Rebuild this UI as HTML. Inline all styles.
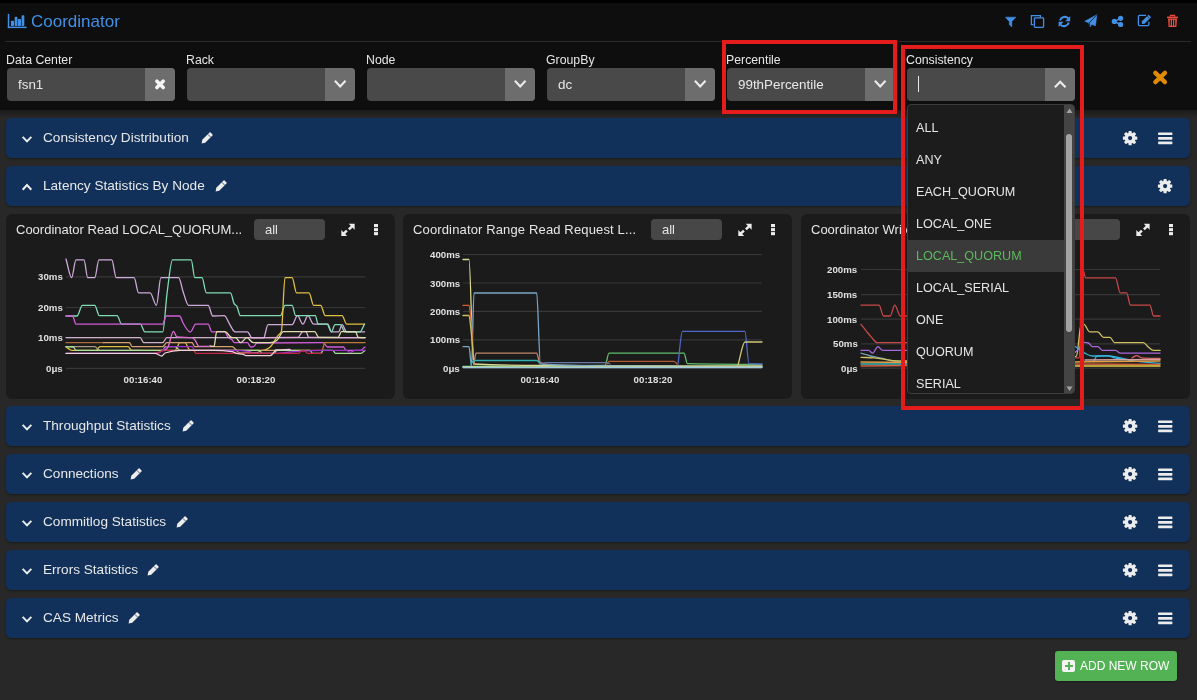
<!DOCTYPE html>
<html><head><meta charset="utf-8">
<style>
*{box-sizing:border-box;margin:0;padding:0}
html,body{width:1197px;height:700px;overflow:hidden;background:#282828;font-family:"Liberation Sans",sans-serif;}
.abs{position:absolute}
#top{left:0;top:0;width:1197px;height:3px;background:#000}
#hdr{left:0;top:3px;width:1197px;height:107px;background:#0e0e0e}
#shadow{left:0;top:110px;width:1197px;height:8px;background:linear-gradient(#1b1b1b,#282828)}
#sep{left:5px;top:41px;width:1186px;height:1px;background:#2a2a2a}
#title{left:31px;top:12px;font-size:17px;color:#4290e6;line-height:20px}
.lbl{font-size:12.3px;color:#e6e6e6;top:53px;line-height:14px;white-space:nowrap}
.inp{top:68px;height:32.5px;width:168.3px;background:#494949;border-radius:4px;overflow:hidden}
.inp .btn{position:absolute;right:0;top:0;width:30.5px;height:33px;background:#6d6d6d}
.inp .val{position:absolute;left:11px;top:9px;font-size:13.4px;color:#e8e8e8;line-height:16px;white-space:nowrap}
.row{left:6px;width:1184px;height:40px;background:#11305a;border-radius:5px;box-shadow:0 1px 2px rgba(0,0,0,.35)}
.row .t{position:absolute;left:37px;top:12px;font-size:13.6px;color:#e8e8e8;line-height:16px;white-space:nowrap}
.panel{top:214px;height:184.5px;background:#1b1b1b;border-radius:6px}
.ptitle{font-size:13px;color:#e6e6e6;line-height:16px;top:222px;white-space:nowrap}
.allbox{top:219px;width:71px;height:21px;background:#474747;border-radius:4px}
.allbox span{position:absolute;left:11px;top:3px;font-size:13px;color:#e6e6e6;line-height:16px}
.ax{font-size:9.7px;font-weight:bold;color:#e0e0e0;line-height:11px;white-space:nowrap}
.dd{left:907px;top:104px;width:168px;height:290px;background:#1c1c1c;border:1px solid #3d3d3d;border-radius:4px;overflow:hidden}
.dd .it{position:absolute;left:8px;width:150px;height:32px;font-size:12.6px;color:#e6e6e6;line-height:32px;white-space:nowrap}
.redbox{border:4px solid #e41c1c}
.abs{will-change:transform}
svg.ov{position:absolute;left:0;top:0;width:1197px;height:700px;overflow:visible}
</style></head><body>
<div class="abs" id="top"></div>
<div class="abs" id="hdr"></div>
<div class="abs" id="shadow"></div>
<div class="abs" id="sep"></div>
<div class="abs" id="title">Coordinator</div>

<div class="abs lbl" style="left:6px">Data Center</div>
<div class="abs lbl" style="left:186px">Rack</div>
<div class="abs lbl" style="left:366px">Node</div>
<div class="abs lbl" style="left:546px">GroupBy</div>
<div class="abs lbl" style="left:726px">Percentile</div>
<div class="abs lbl" style="left:906px">Consistency</div>

<div class="abs inp" style="left:7px"><div class="val">fsn1</div><div class="btn"></div></div>
<div class="abs inp" style="left:187px"><div class="btn"></div></div>
<div class="abs inp" style="left:367px"><div class="btn"></div></div>
<div class="abs inp" style="left:547px"><div class="val">dc</div><div class="btn"></div></div>
<div class="abs inp" style="left:727px"><div class="val">99thPercentile</div><div class="btn"></div></div>
<div class="abs inp" style="left:907px"><div class="btn"></div></div>
<div class="abs" style="left:918px;top:76px;width:1.3px;height:16px;background:#e8e8e8"></div>

<div class="abs row" style="top:118px"><div class="t">Consistency Distribution</div></div>
<div class="abs row" style="top:166px"><div class="t">Latency Statistics By Node</div></div>
<div class="abs row" style="top:406px"><div class="t">Throughput Statistics</div></div>
<div class="abs row" style="top:454px"><div class="t">Connections</div></div>
<div class="abs row" style="top:502px"><div class="t">Commitlog Statistics</div></div>
<div class="abs row" style="top:550px"><div class="t">Errors Statistics</div></div>
<div class="abs row" style="top:598px"><div class="t">CAS Metrics</div></div>

<div class="abs panel" style="left:6px;width:389.3px"></div>
<div class="abs panel" style="left:403.3px;width:389.4px"></div>
<div class="abs panel" style="left:800.7px;width:389.3px"></div>

<div class="abs ptitle" style="left:16px">Coordinator Read LOCAL_QUORUM...</div>
<div class="abs ptitle" style="left:413px;letter-spacing:0.14px">Coordinator Range Read Request L...</div>
<div class="abs ptitle" style="left:811px">Coordinator Write LOCAL_QUORUM...</div>
<div class="abs allbox" style="left:254px"><span>all</span></div>
<div class="abs allbox" style="left:651px"><span>all</span></div>
<div class="abs allbox" style="left:1049px"><span>all</span></div>
<div class="abs ax" style="right:1134.2px;top:271.3px">30ms</div><div class="abs ax" style="right:1134.2px;top:302.1px">20ms</div><div class="abs ax" style="right:1134.2px;top:332.3px">10ms</div><div class="abs ax" style="right:1134.2px;top:363.1px">0μs</div><div class="abs ax" style="right:737.0px;top:249.0px">400ms</div><div class="abs ax" style="right:737.0px;top:277.5px">300ms</div><div class="abs ax" style="right:737.0px;top:305.8px">200ms</div><div class="abs ax" style="right:737.0px;top:334.2px">100ms</div><div class="abs ax" style="right:737.0px;top:362.9px">0μs</div><div class="abs ax" style="right:339.4px;top:264.0px">200ms</div><div class="abs ax" style="right:339.4px;top:289.1px">150ms</div><div class="abs ax" style="right:339.4px;top:313.6px">100ms</div><div class="abs ax" style="right:339.4px;top:338.4px">50ms</div><div class="abs ax" style="right:339.4px;top:362.9px">0μs</div><div class="abs ax" style="left:123.0px;width:40px;text-align:center;top:374.3px">00:16:40</div><div class="abs ax" style="left:235.6px;width:40px;text-align:center;top:374.3px">00:18:20</div><div class="abs ax" style="left:519.7px;width:40px;text-align:center;top:374.3px">00:16:40</div><div class="abs ax" style="left:632.6px;width:40px;text-align:center;top:374.3px">00:18:20</div><div class="abs ax" style="left:917.0px;width:40px;text-align:center;top:374.3px">00:16:40</div><div class="abs ax" style="left:1030.0px;width:40px;text-align:center;top:374.3px">00:18:20</div>
<svg class="ov" viewBox="0 0 1197 700"><line x1="66" y1="276.8" x2="365" y2="276.8" stroke="#373737" stroke-width="1.2"/><line x1="66" y1="307.5" x2="365" y2="307.5" stroke="#373737" stroke-width="1.2"/><line x1="66" y1="337.9" x2="365" y2="337.9" stroke="#373737" stroke-width="1.2"/><line x1="66" y1="368.3" x2="365" y2="368.3" stroke="#373737" stroke-width="1.2"/><line x1="463" y1="254.5" x2="762" y2="254.5" stroke="#373737" stroke-width="1.2"/><line x1="463" y1="283" x2="762" y2="283" stroke="#373737" stroke-width="1.2"/><line x1="463" y1="311.4" x2="762" y2="311.4" stroke="#373737" stroke-width="1.2"/><line x1="463" y1="339.8" x2="762" y2="339.8" stroke="#373737" stroke-width="1.2"/><line x1="463" y1="368.2" x2="762" y2="368.2" stroke="#373737" stroke-width="1.2"/><line x1="861" y1="269.5" x2="1160" y2="269.5" stroke="#373737" stroke-width="1.2"/><line x1="861" y1="294.6" x2="1160" y2="294.6" stroke="#373737" stroke-width="1.2"/><line x1="861" y1="319.1" x2="1160" y2="319.1" stroke="#373737" stroke-width="1.2"/><line x1="861" y1="343.9" x2="1160" y2="343.9" stroke="#373737" stroke-width="1.2"/><line x1="861" y1="368.2" x2="1160" y2="368.2" stroke="#373737" stroke-width="1.2"/><path d="M66.00,259.00 C67.87,265.23 69.73,277.70 71.60,277.70 C73.07,277.70 74.53,259.80 76.00,259.80 C78.67,259.80 81.33,259.80 84.00,259.80 C85.23,259.80 86.47,277.70 87.70,277.70 C90.07,277.70 92.43,277.70 94.80,277.70 C96.17,277.70 97.53,259.80 98.90,259.80 C103.20,259.80 107.50,259.80 111.80,259.80 C113.27,259.80 114.73,277.70 116.20,277.70 C122.17,277.70 128.13,277.70 134.10,277.70 C135.60,277.70 137.10,292.90 138.60,292.90 C142.47,292.90 146.33,292.90 150.20,292.90 C152.27,292.90 154.33,305.40 156.40,305.40 C157.90,305.40 159.40,277.70 160.90,277.70 C166.83,277.70 172.77,277.70 178.70,277.70 C180.20,277.70 181.70,287.71 183.20,292.00 C185.00,297.15 186.80,305.40 188.60,305.40 C195.13,305.40 201.67,305.40 208.20,305.40 C209.70,305.40 211.20,316.00 212.70,316.00 C216.57,316.00 220.43,315.70 224.30,315.70 C226.07,315.70 227.83,321.44 229.60,324.10 C231.40,326.81 233.20,331.80 235.00,331.80 C239.17,331.80 243.33,331.80 247.50,331.80 C249.00,331.80 250.50,337.90 252.00,337.90 C255.87,337.90 259.73,337.90 263.60,337.90 C265.07,337.90 266.53,324.60 268.00,324.60 C276.03,324.60 284.07,324.60 292.10,324.60 C293.90,324.60 295.70,315.70 297.50,315.70 C299.30,315.70 301.10,324.10 302.90,324.10 C304.57,324.10 306.23,315.70 307.90,315.70 C309.80,315.70 311.70,324.10 313.60,324.10 C318.37,324.10 323.13,324.10 327.90,324.10 C329.07,324.10 330.23,331.80 331.40,331.80 C333.80,331.80 336.20,331.80 338.60,331.80 C339.77,331.80 340.93,324.60 342.10,324.60 C343.60,324.60 345.10,331.80 346.60,331.80 C352.60,331.80 358.60,331.80 364.60,331.80" fill="none" stroke="#cfaadc" stroke-width="1.3" stroke-linejoin="round" stroke-linecap="round"/><path d="M66.00,316.00 C69.67,316.00 73.33,316.00 77.00,316.00 C78.77,316.00 80.53,305.40 82.30,305.40 C86.47,305.40 90.63,305.40 94.80,305.40 C96.30,305.40 97.80,315.70 99.30,315.70 C105.23,315.70 111.17,315.70 117.10,315.70 C118.60,315.70 120.10,324.10 121.60,324.10 C127.87,324.10 134.13,324.10 140.40,324.10 C141.87,324.10 143.33,331.80 144.80,331.80 C150.77,331.80 156.73,331.80 162.70,331.80 C164.17,331.80 165.63,304.08 167.10,292.90 C168.90,279.18 170.70,259.80 172.50,259.80 C178.73,259.80 184.97,259.80 191.20,259.80 C192.40,259.80 193.60,277.70 194.80,277.70 C197.20,277.70 199.60,277.70 202.00,277.70 C203.47,277.70 204.93,292.90 206.40,292.90 C214.43,292.90 222.47,292.90 230.50,292.90 C231.70,292.90 232.90,301.41 234.10,303.60 C235.00,305.24 235.90,304.69 236.80,306.20 C238.00,308.22 239.20,315.70 240.40,315.70 C253.77,315.70 267.13,315.70 280.50,315.70 C282.00,315.70 283.50,305.40 285.00,305.40 C287.37,305.40 289.73,305.40 292.10,305.40 C293.30,305.40 294.50,315.70 295.70,315.70 C302.27,315.70 308.83,315.70 315.40,315.70 C316.27,315.70 317.13,324.10 318.00,324.10 C321.00,324.10 324.00,324.10 327.00,324.10 C328.47,324.10 329.93,331.80 331.40,331.80 C332.60,331.80 333.80,324.60 335.00,324.60 C336.80,324.60 338.60,324.60 340.40,324.60 C341.87,324.60 343.33,331.80 344.80,331.80 C349.87,331.80 354.93,331.80 360.00,331.80 C361.50,331.80 363.00,326.67 364.50,324.10" fill="none" stroke="#7fdcb4" stroke-width="1.3" stroke-linejoin="round" stroke-linecap="round"/><path d="M66.00,316.00 C68.17,316.00 70.33,316.00 72.50,316.00 C73.67,316.00 74.83,324.10 76.00,324.10 C104.90,324.10 133.80,324.10 162.70,324.10 C163.87,324.10 165.03,316.00 166.20,316.00 C170.67,316.00 175.13,316.00 179.60,316.00 C180.80,316.00 182.00,321.11 183.20,323.20 C185.60,327.39 188.00,332.10 190.40,332.10 C192.17,332.10 193.93,324.10 195.70,324.10 C199.87,324.10 204.03,324.10 208.20,324.10 C209.40,324.10 210.60,331.80 211.80,331.80 C216.10,331.80 220.40,331.80 224.70,331.80 C225.80,331.80 226.90,335.71 228.00,337.00 C229.33,338.56 230.67,338.45 232.00,339.70 C232.90,340.54 233.80,342.70 234.70,342.70 C238.93,342.70 243.17,342.70 247.40,342.70 C248.53,342.70 249.67,347.00 250.80,347.00 C251.87,347.00 252.93,346.80 254.00,346.40 C254.93,346.05 255.87,343.01 256.80,343.00 C279.00,342.80 301.20,342.70 323.40,342.70 C324.73,342.70 326.07,347.00 327.40,347.00 C332.77,347.00 338.13,347.00 343.50,347.00 C344.37,347.00 345.23,350.40 346.10,350.40 C350.73,350.40 355.37,350.40 360.00,350.40 C361.67,350.40 363.33,348.13 365.00,347.00" fill="none" stroke="#d25ed8" stroke-width="1.3" stroke-linejoin="round" stroke-linecap="round"/><path d="M66.00,347.00 C68.00,348.13 70.00,350.40 72.00,350.40 C80.00,350.40 88.00,350.40 96.00,350.40 C97.33,350.40 98.67,346.70 100.00,346.70 C109.33,346.70 118.67,346.70 128.00,346.70 C129.33,346.70 130.67,350.40 132.00,350.40 C146.33,350.40 160.67,350.40 175.00,350.40 C176.67,350.40 178.33,342.70 180.00,342.70 C181.67,342.70 183.33,342.70 185.00,342.70 C186.67,342.70 188.33,350.40 190.00,350.40 C214.00,350.40 238.00,350.40 262.00,350.40 C264.90,350.40 267.80,349.07 270.70,346.40 C273.10,344.19 275.50,338.94 277.90,335.70 C279.07,334.12 280.23,334.20 281.40,331.20 C282.60,328.11 283.80,277.70 285.00,277.70 C287.37,277.70 289.73,277.70 292.10,277.70 C293.60,277.70 295.10,292.90 296.60,292.90 C300.77,292.90 304.93,292.90 309.10,292.90 C310.60,292.90 312.10,305.40 313.60,305.40 C315.97,305.40 318.33,305.40 320.70,305.40 C322.20,305.40 323.70,315.70 325.20,315.70 C330.83,315.70 336.47,315.70 342.10,315.70 C343.60,315.70 345.10,324.10 346.60,324.10 C352.60,324.10 358.60,324.10 364.60,324.10" fill="none" stroke="#e0c040" stroke-width="1.3" stroke-linejoin="round" stroke-linecap="round"/><path d="M66.00,337.70 C90.73,337.70 115.47,337.70 140.20,337.70 C141.40,337.70 142.60,342.70 143.80,342.70 C150.10,342.70 156.40,342.70 162.70,342.70 C164.03,342.70 165.37,337.70 166.70,337.70 C232.80,337.70 298.90,337.70 365.00,337.70" fill="none" stroke="#cdb0c8" stroke-width="1.3" stroke-linejoin="round" stroke-linecap="round"/><path d="M250.00,337.70 C266.00,337.60 282.00,337.60 298.00,337.40 C299.57,337.38 301.13,331.70 302.70,331.70 C303.80,331.70 304.90,331.70 306.00,331.70 C306.90,331.70 307.80,337.39 308.70,337.40 C327.47,337.60 346.23,337.60 365.00,337.70" fill="none" stroke="#e0a8d8" stroke-width="1.3" stroke-linejoin="round" stroke-linecap="round"/><path d="M66.00,342.70 L103.50,342.70" fill="none" stroke="#a86838" stroke-width="1.3" stroke-linejoin="round" stroke-linecap="round"/><path d="M103.50,342.70 C112.17,342.70 120.83,342.70 129.50,342.70 C130.40,342.70 131.30,346.70 132.20,346.70 C142.37,346.70 152.53,346.70 162.70,346.70 C164.03,346.70 165.37,342.70 166.70,342.70 C175.17,342.70 183.63,342.70 192.10,342.70 C193.00,342.70 193.90,346.70 194.80,346.70 C207.20,346.70 219.60,346.70 232.00,346.70 C234.67,346.70 237.33,353.00 240.00,353.00 C245.33,353.00 250.67,353.00 256.00,353.00 C258.00,353.00 260.00,350.40 262.00,350.40 C271.33,350.40 280.67,350.40 290.00,350.40" fill="none" stroke="#d8a070" stroke-width="1.3" stroke-linejoin="round" stroke-linecap="round"/><path d="M290.00,350.40 C300.67,350.40 311.33,350.40 322.00,350.40 C322.93,350.40 323.87,342.70 324.80,342.70 C338.20,342.70 351.60,342.70 365.00,342.70" fill="none" stroke="#c07838" stroke-width="1.3" stroke-linejoin="round" stroke-linecap="round"/><path d="M66.00,346.70 C75.60,346.70 85.20,346.70 94.80,346.70 C96.53,346.70 98.27,350.40 100.00,350.40 C113.33,350.40 126.67,350.40 140.00,350.40" fill="none" stroke="#a89880" stroke-width="1.3" stroke-linejoin="round" stroke-linecap="round"/><path d="M66.00,346.70 C68.47,346.80 70.93,346.80 73.40,347.00 C74.27,347.07 75.13,350.40 76.00,350.40 C104.90,350.40 133.80,350.40 162.70,350.40 C163.60,350.40 164.50,346.70 165.40,346.70 C168.60,346.70 171.80,346.70 175.00,346.70 C176.67,346.70 178.33,350.40 180.00,350.40 C204.47,350.40 228.93,350.40 253.40,350.40 C255.43,350.40 257.47,350.40 259.50,350.40 C260.33,350.40 261.17,353.40 262.00,353.40 C266.00,353.40 270.00,353.40 274.00,353.40 C275.00,353.40 276.00,350.40 277.00,350.40 C288.00,350.40 299.00,350.40 310.00,350.40 C310.90,350.40 311.80,353.40 312.70,353.40 C315.37,353.40 318.03,353.40 320.70,353.40 C321.60,353.40 322.50,350.40 323.40,350.40 C326.53,350.40 329.67,350.40 332.80,350.40 C333.70,350.40 334.60,353.40 335.50,353.40 C343.97,353.40 352.43,353.40 360.90,353.40 C362.23,353.40 363.57,351.40 364.90,350.40" fill="none" stroke="#a8e098" stroke-width="1.3" stroke-linejoin="round" stroke-linecap="round"/><path d="M66.00,353.40 C96.47,353.40 126.93,353.40 157.40,353.40 C159.27,353.40 161.13,351.45 163.00,350.00 C164.23,349.04 165.47,346.70 166.70,346.70 C175.17,346.70 183.63,346.70 192.10,346.70 C193.00,346.70 193.90,350.40 194.80,350.40 C207.20,350.40 219.60,350.40 232.00,350.40 C238.00,350.40 244.00,350.83 250.00,351.70 C251.13,351.86 252.27,353.40 253.40,353.40 C261.20,353.40 269.00,353.40 276.80,353.40 C281.20,353.40 285.60,352.40 290.00,352.00 C300.23,351.08 310.47,350.40 320.70,350.40 C329.40,350.40 338.10,350.40 346.80,350.40 C347.93,350.40 349.07,352.40 350.20,352.40 C351.80,352.40 353.40,350.40 355.00,350.40 C358.33,350.40 361.67,350.40 365.00,350.40" fill="none" stroke="#a030d0" stroke-width="1.3" stroke-linejoin="round" stroke-linecap="round"/><path d="M155.00,353.40 C158.47,352.40 161.93,350.40 165.40,350.40 C174.83,350.40 184.27,350.40 193.70,350.40 C194.47,350.40 195.23,353.40 196.00,353.40 C230.23,353.40 264.47,353.40 298.70,353.40 C299.47,353.40 300.23,351.00 301.00,351.00 C302.23,351.00 303.47,351.00 304.70,351.00 C305.60,351.00 306.50,353.40 307.40,353.40 C312.27,353.40 317.13,353.40 322.00,353.40" fill="none" stroke="#c02848" stroke-width="1.3" stroke-linejoin="round" stroke-linecap="round"/><path d="M66.00,353.40 C95.67,353.40 125.33,353.40 155.00,353.40 C157.33,353.40 159.67,356.00 162.00,356.00 C163.00,356.00 164.00,353.35 165.00,353.00 C170.00,351.27 175.00,350.40 180.00,350.40 C191.33,350.40 202.67,350.40 214.00,350.40 C220.00,350.40 226.00,350.83 232.00,351.70 C233.57,351.93 235.13,352.97 236.70,353.40 C238.93,354.01 241.17,353.73 243.40,354.40 C244.27,354.66 245.13,355.70 246.00,355.70 C254.07,355.70 262.13,355.70 270.20,355.70 C271.07,355.70 271.93,354.52 272.80,353.70 C273.87,352.69 274.93,350.08 276.00,350.00 C280.67,349.67 285.33,349.67 290.00,349.50" fill="none" stroke="#f0d0dc" stroke-width="1.3" stroke-linejoin="round" stroke-linecap="round"/><path d="M210.00,346.00 C211.33,346.13 212.67,346.40 214.00,346.40 C214.90,346.40 215.80,331.70 216.70,331.70 C219.47,331.70 222.23,331.70 225.00,331.70 C227.33,331.70 229.67,337.70 232.00,337.70 C233.13,337.70 234.27,337.70 235.40,337.70 C237.17,337.70 238.93,342.70 240.70,342.70 C242.73,342.70 244.77,337.70 246.80,337.70 C249.00,337.70 251.20,342.70 253.40,342.70 C259.00,342.70 264.60,342.70 270.20,342.70 C272.40,342.70 274.60,341.97 276.80,340.50 C279.03,339.01 281.27,331.70 283.50,331.70 C293.90,331.70 304.30,331.70 314.70,331.70 C316.03,331.70 317.37,337.40 318.70,337.40 C325.17,337.40 331.63,337.40 338.10,337.40 C339.23,337.40 340.37,331.70 341.50,331.70 C346.17,331.70 350.83,331.70 355.50,331.70 C356.40,331.70 357.30,337.32 358.20,337.40 C360.43,337.60 362.67,337.60 364.90,337.70" fill="none" stroke="#e0dcb0" stroke-width="1.3" stroke-linejoin="round" stroke-linecap="round"/><path d="M165.00,350.00 C166.00,349.00 167.00,348.67 168.00,347.00 C169.80,343.99 171.60,331.40 173.40,331.40 C174.60,331.40 175.80,336.89 177.00,337.00 C182.00,337.47 187.00,337.23 192.00,337.70 C193.00,337.79 194.00,338.88 195.00,340.00 C196.33,341.50 197.67,346.40 199.00,346.40 C202.67,346.40 206.33,346.40 210.00,346.40" fill="none" stroke="#e070d0" stroke-width="1.3" stroke-linejoin="round" stroke-linecap="round"/><path d="M463.00,366.50 C488.67,366.33 514.33,366.18 540.00,366.00 C561.67,365.85 583.33,365.83 605.00,365.50 C606.33,365.48 607.67,353.20 609.00,353.20 C634.00,353.20 659.00,353.20 684.00,353.20 C685.13,353.20 686.27,363.68 687.40,363.70 C712.27,364.23 737.13,364.23 762.00,364.50" fill="none" stroke="#5fbf6f" stroke-width="1.3" stroke-linejoin="round" stroke-linecap="round"/><path d="M463.00,259.50 C465.00,259.50 467.00,259.50 469.00,259.50 C470.53,259.50 472.07,363.93 473.60,364.00 C495.73,365.00 517.87,365.40 540.00,365.50 C614.00,365.83 688.00,365.83 762.00,366.00" fill="none" stroke="#d8d890" stroke-width="1.3" stroke-linejoin="round" stroke-linecap="round"/><path d="M463.00,346.70 C465.00,346.70 467.00,346.70 469.00,346.70 C469.83,346.70 470.67,366.00 471.50,366.00 C472.33,366.00 473.17,293.00 474.00,293.00 C494.90,293.00 515.80,293.00 536.70,293.00 C537.93,293.00 539.17,363.92 540.40,364.00 C560.27,365.33 580.13,365.75 600.00,366.00 C654.00,366.67 708.00,366.67 762.00,367.00" fill="none" stroke="#7aa6c6" stroke-width="1.3" stroke-linejoin="round" stroke-linecap="round"/><path d="M463.00,305.30 C465.00,305.30 467.00,305.30 469.00,305.30 C469.67,305.30 470.33,313.15 471.00,320.00 C472.00,330.28 473.00,349.33 474.00,364.00" fill="none" stroke="#d86030" stroke-width="1.3" stroke-linejoin="round" stroke-linecap="round"/><path d="M463.00,315.50 C465.00,315.50 467.00,315.50 469.00,315.50 C469.67,315.50 470.33,324.08 471.00,330.00 C472.00,338.88 473.00,352.67 474.00,364.00" fill="none" stroke="#c8c060" stroke-width="1.3" stroke-linejoin="round" stroke-linecap="round"/><path d="M474.00,364.00 C474.67,360.40 475.33,353.20 476.00,353.20 C496.23,353.20 516.47,353.20 536.70,353.20 C537.63,353.20 538.57,361.32 539.50,362.00 C541.33,363.33 543.17,363.33 545.00,364.00" fill="none" stroke="#c08868" stroke-width="1.3" stroke-linejoin="round" stroke-linecap="round"/><path d="M471.00,364.00 C472.00,362.83 473.00,360.50 474.00,360.50 C494.90,360.50 515.80,360.50 536.70,360.50 C537.93,360.50 539.17,362.83 540.40,364.00" fill="none" stroke="#30b0b0" stroke-width="1.3" stroke-linejoin="round" stroke-linecap="round"/><path d="M540.00,364.00 C542.33,363.53 544.67,362.60 547.00,362.60 C567.00,362.60 587.00,362.60 607.00,362.60 C608.00,362.60 609.00,363.53 610.00,364.00" fill="none" stroke="#6878a8" stroke-width="1.3" stroke-linejoin="round" stroke-linecap="round"/><path d="M607.00,364.00 C607.67,363.13 608.33,361.40 609.00,361.40 C630.67,361.40 652.33,361.40 674.00,361.40 C675.00,361.40 676.00,363.13 677.00,364.00" fill="none" stroke="#b05830" stroke-width="1.3" stroke-linejoin="round" stroke-linecap="round"/><path d="M678.00,364.00 C679.47,353.10 680.93,331.30 682.40,331.30 C703.23,331.30 724.07,331.30 744.90,331.30 C746.27,331.30 747.63,363.64 749.00,363.70 C753.33,363.90 757.67,363.90 762.00,364.00" fill="none" stroke="#5068c8" stroke-width="1.3" stroke-linejoin="round" stroke-linecap="round"/><path d="M738.00,365.00 C740.30,357.33 742.60,342.00 744.90,342.00 C750.60,342.00 756.30,342.00 762.00,342.00" fill="none" stroke="#d0c878" stroke-width="1.3" stroke-linejoin="round" stroke-linecap="round"/><path d="M463.00,366.80 L762.00,366.80" fill="none" stroke="#c8e0a0" stroke-width="1.3" stroke-linejoin="round" stroke-linecap="round"/><path d="M463.00,367.60 L762.00,367.60" fill="none" stroke="#a0c8e0" stroke-width="1.3" stroke-linejoin="round" stroke-linecap="round"/><path d="M861.00,305.20 C867.00,305.20 873.00,305.20 879.00,305.20 C880.53,305.20 882.07,316.00 883.60,316.00 C885.77,316.00 887.93,316.00 890.10,316.00 C891.67,316.00 893.23,305.20 894.80,305.20 C896.67,305.20 898.53,316.00 900.40,316.00 C904.27,316.00 908.13,316.00 912.00,316.00" fill="none" stroke="#c84848" stroke-width="1.3" stroke-linejoin="round" stroke-linecap="round"/><path d="M861.00,324.30 C862.97,326.80 864.93,329.39 866.90,331.80 C868.47,333.72 870.03,335.71 871.60,337.40 C873.43,339.38 875.27,342.60 877.10,342.60 C888.73,342.60 900.37,342.60 912.00,342.60" fill="none" stroke="#c84848" stroke-width="1.3" stroke-linejoin="round" stroke-linecap="round"/><path d="M861.00,350.40 C863.60,350.40 866.20,350.40 868.80,350.40 C870.03,350.40 871.27,353.20 872.50,353.20 C874.33,353.20 876.17,346.70 878.00,346.70 C879.57,346.70 881.13,350.40 882.70,350.40 C892.47,350.40 902.23,350.40 912.00,350.40" fill="none" stroke="#a868e0" stroke-width="1.3" stroke-linejoin="round" stroke-linecap="round"/><path d="M861.00,353.20 C864.20,354.13 867.40,355.23 870.60,356.00 C873.73,356.76 876.87,357.17 880.00,357.80 C885.57,358.93 891.13,361.14 896.70,361.50 C901.80,361.83 906.90,361.83 912.00,362.00" fill="none" stroke="#70a0b0" stroke-width="1.3" stroke-linejoin="round" stroke-linecap="round"/><path d="M861.00,357.40 C865.43,357.53 869.87,357.53 874.30,357.80 C880.53,358.17 886.77,360.34 893.00,360.60 C899.33,360.87 905.67,360.87 912.00,361.00" fill="none" stroke="#d0c060" stroke-width="1.3" stroke-linejoin="round" stroke-linecap="round"/><path d="M861.00,362.00 L912.00,362.50" fill="none" stroke="#e0a040" stroke-width="1.3" stroke-linejoin="round" stroke-linecap="round"/><path d="M861.00,364.00 L912.00,364.00" fill="none" stroke="#40b8c0" stroke-width="1.3" stroke-linejoin="round" stroke-linecap="round"/><path d="M861.00,366.00 L912.00,365.50" fill="none" stroke="#d06040" stroke-width="1.3" stroke-linejoin="round" stroke-linecap="round"/><path d="M1070.00,357.80 C1073.10,357.80 1076.20,357.80 1079.30,357.80 C1080.20,357.80 1081.10,266.70 1082.00,266.70 C1083.27,266.70 1084.53,277.90 1085.80,277.90 C1095.70,277.90 1105.60,277.90 1115.50,277.90 C1117.07,277.90 1118.63,292.80 1120.20,292.80 C1122.37,292.80 1124.53,292.80 1126.70,292.80 C1127.93,292.80 1129.17,305.20 1130.40,305.20 C1136.90,305.20 1143.40,305.20 1149.90,305.20 C1151.13,305.20 1152.37,316.00 1153.60,316.00 C1155.77,316.00 1157.93,316.00 1160.10,316.00" fill="none" stroke="#c84848" stroke-width="1.3" stroke-linejoin="round" stroke-linecap="round"/><path d="M1070.00,358.00 C1072.17,357.33 1074.33,357.33 1076.50,356.00 C1078.07,355.04 1079.63,324.30 1081.20,324.30 C1082.13,324.30 1083.07,324.30 1084.00,324.30 C1085.83,324.30 1087.67,331.80 1089.50,331.80 C1092.30,331.80 1095.10,331.80 1097.90,331.80 C1099.77,331.80 1101.63,337.40 1103.50,337.40 C1105.67,337.40 1107.83,337.40 1110.00,337.40 C1111.53,337.40 1113.07,342.60 1114.60,342.60 C1124.20,342.60 1133.80,342.60 1143.40,342.60 C1144.93,342.60 1146.47,345.49 1148.00,346.70 C1149.87,348.17 1151.73,350.40 1153.60,350.40 C1155.77,350.40 1157.93,350.40 1160.10,350.40" fill="none" stroke="#d0c060" stroke-width="1.3" stroke-linejoin="round" stroke-linecap="round"/><path d="M1070.00,355.00 C1072.47,353.47 1074.93,352.70 1077.40,350.40 C1079.60,348.35 1081.80,342.40 1084.00,342.40 C1085.53,342.40 1087.07,342.60 1088.60,343.00 C1089.83,343.32 1091.07,346.70 1092.30,346.70 C1094.17,346.70 1096.03,346.70 1097.90,346.70 C1099.43,346.70 1100.97,350.40 1102.50,350.40 C1106.83,350.40 1111.17,350.40 1115.50,350.40 C1117.07,350.40 1118.63,353.20 1120.20,353.20 C1133.50,353.20 1146.80,353.20 1160.10,353.20" fill="none" stroke="#a868e0" stroke-width="1.3" stroke-linejoin="round" stroke-linecap="round"/><path d="M1070.00,344.00 C1071.87,344.90 1073.73,345.65 1075.60,346.70 C1078.70,348.45 1081.80,351.59 1084.90,353.20 C1087.37,354.48 1089.83,356.00 1092.30,356.00 C1097.87,356.00 1103.43,356.00 1109.00,356.00 C1116.43,356.00 1123.87,359.42 1131.30,360.60 C1140.90,362.12 1150.50,362.47 1160.10,363.40" fill="none" stroke="#38b0d8" stroke-width="1.3" stroke-linejoin="round" stroke-linecap="round"/><path d="M1094.20,360.60 C1095.13,359.07 1096.07,356.07 1097.00,356.00 C1100.40,355.73 1103.80,355.60 1107.20,355.60 C1109.67,355.60 1112.13,357.19 1114.60,357.80 C1120.07,359.15 1125.53,359.27 1131.00,360.00" fill="none" stroke="#38b0d8" stroke-width="1.3" stroke-linejoin="round" stroke-linecap="round"/><path d="M1132.00,357.80 C1133.63,357.07 1135.27,355.60 1136.90,355.60 C1138.47,355.60 1140.03,357.68 1141.60,357.80 C1147.73,358.27 1153.87,358.27 1160.00,358.50" fill="none" stroke="#d86060" stroke-width="1.3" stroke-linejoin="round" stroke-linecap="round"/><path d="M1070.00,362.00 L1160.00,361.00" fill="none" stroke="#e0a040" stroke-width="1.3" stroke-linejoin="round" stroke-linecap="round"/><path d="M1070.00,364.00 L1160.00,364.50" fill="none" stroke="#d06040" stroke-width="1.3" stroke-linejoin="round" stroke-linecap="round"/><path d="M1070.00,366.00 L1160.00,366.00" fill="none" stroke="#e8d040" stroke-width="1.3" stroke-linejoin="round" stroke-linecap="round"/><path d="M1085.00,360.00 L1160.00,359.50" fill="none" stroke="#d8a0a0" stroke-width="1.3" stroke-linejoin="round" stroke-linecap="round"/><path d="M23.35,137.60 L27.00,141.40 L30.65,137.60" fill="none" stroke="#ececec" stroke-width="2" stroke-linecap="square"/><g transform="translate(206.60,138.50) rotate(-45)"><path d="M-7.04,0 L-4.04,-2.10 L6.24,-2.10 Q7.037999999999999,-2.1 7.037999999999999,-1.3 L7.037999999999999,1.3 Q7.037999999999999,2.1 6.24,2.10 L-4.04,2.10 Z" fill="#ececec"/><line x1="3.84" y1="-2.10" x2="3.84" y2="2.10" stroke="#11305a" stroke-width="0.7"/></g><g transform="translate(1130.10,138.10)"><circle r="5.5" fill="#ececec"/><rect x="-7.2" y="-1.55" width="14.4" height="3.1" rx="0.5" fill="#ececec" transform="rotate(0)"/><rect x="-7.2" y="-1.55" width="14.4" height="3.1" rx="0.5" fill="#ececec" transform="rotate(45)"/><rect x="-7.2" y="-1.55" width="14.4" height="3.1" rx="0.5" fill="#ececec" transform="rotate(90)"/><rect x="-7.2" y="-1.55" width="14.4" height="3.1" rx="0.5" fill="#ececec" transform="rotate(135)"/><circle r="2.1" fill="#11305a"/></g><rect x="1158.1" y="132.40" width="14.3" height="2.7" fill="#ececec" rx="0.6"/><rect x="1158.1" y="137.00" width="14.3" height="2.7" fill="#ececec" rx="0.6"/><rect x="1158.1" y="141.50" width="14.3" height="2.7" fill="#ececec" rx="0.6"/><path d="M23.35,189.00 L27.00,185.00 L30.65,189.00" fill="none" stroke="#ececec" stroke-width="2" stroke-linecap="square"/><g transform="translate(220.60,186.50) rotate(-45)"><path d="M-7.04,0 L-4.04,-2.10 L6.24,-2.10 Q7.037999999999999,-2.1 7.037999999999999,-1.3 L7.037999999999999,1.3 Q7.037999999999999,2.1 6.24,2.10 L-4.04,2.10 Z" fill="#ececec"/><line x1="3.84" y1="-2.10" x2="3.84" y2="2.10" stroke="#11305a" stroke-width="0.7"/></g><g transform="translate(1165.10,186.10)"><circle r="5.5" fill="#ececec"/><rect x="-7.2" y="-1.55" width="14.4" height="3.1" rx="0.5" fill="#ececec" transform="rotate(0)"/><rect x="-7.2" y="-1.55" width="14.4" height="3.1" rx="0.5" fill="#ececec" transform="rotate(45)"/><rect x="-7.2" y="-1.55" width="14.4" height="3.1" rx="0.5" fill="#ececec" transform="rotate(90)"/><rect x="-7.2" y="-1.55" width="14.4" height="3.1" rx="0.5" fill="#ececec" transform="rotate(135)"/><circle r="2.1" fill="#11305a"/></g><path d="M23.35,425.60 L27.00,429.40 L30.65,425.60" fill="none" stroke="#ececec" stroke-width="2" stroke-linecap="square"/><g transform="translate(187.60,426.50) rotate(-45)"><path d="M-7.04,0 L-4.04,-2.10 L6.24,-2.10 Q7.037999999999999,-2.1 7.037999999999999,-1.3 L7.037999999999999,1.3 Q7.037999999999999,2.1 6.24,2.10 L-4.04,2.10 Z" fill="#ececec"/><line x1="3.84" y1="-2.10" x2="3.84" y2="2.10" stroke="#11305a" stroke-width="0.7"/></g><g transform="translate(1130.10,426.10)"><circle r="5.5" fill="#ececec"/><rect x="-7.2" y="-1.55" width="14.4" height="3.1" rx="0.5" fill="#ececec" transform="rotate(0)"/><rect x="-7.2" y="-1.55" width="14.4" height="3.1" rx="0.5" fill="#ececec" transform="rotate(45)"/><rect x="-7.2" y="-1.55" width="14.4" height="3.1" rx="0.5" fill="#ececec" transform="rotate(90)"/><rect x="-7.2" y="-1.55" width="14.4" height="3.1" rx="0.5" fill="#ececec" transform="rotate(135)"/><circle r="2.1" fill="#11305a"/></g><rect x="1158.1" y="420.40" width="14.3" height="2.7" fill="#ececec" rx="0.6"/><rect x="1158.1" y="425.00" width="14.3" height="2.7" fill="#ececec" rx="0.6"/><rect x="1158.1" y="429.50" width="14.3" height="2.7" fill="#ececec" rx="0.6"/><path d="M23.35,473.60 L27.00,477.40 L30.65,473.60" fill="none" stroke="#ececec" stroke-width="2" stroke-linecap="square"/><g transform="translate(135.60,474.50) rotate(-45)"><path d="M-7.04,0 L-4.04,-2.10 L6.24,-2.10 Q7.037999999999999,-2.1 7.037999999999999,-1.3 L7.037999999999999,1.3 Q7.037999999999999,2.1 6.24,2.10 L-4.04,2.10 Z" fill="#ececec"/><line x1="3.84" y1="-2.10" x2="3.84" y2="2.10" stroke="#11305a" stroke-width="0.7"/></g><g transform="translate(1130.10,474.10)"><circle r="5.5" fill="#ececec"/><rect x="-7.2" y="-1.55" width="14.4" height="3.1" rx="0.5" fill="#ececec" transform="rotate(0)"/><rect x="-7.2" y="-1.55" width="14.4" height="3.1" rx="0.5" fill="#ececec" transform="rotate(45)"/><rect x="-7.2" y="-1.55" width="14.4" height="3.1" rx="0.5" fill="#ececec" transform="rotate(90)"/><rect x="-7.2" y="-1.55" width="14.4" height="3.1" rx="0.5" fill="#ececec" transform="rotate(135)"/><circle r="2.1" fill="#11305a"/></g><rect x="1158.1" y="468.40" width="14.3" height="2.7" fill="#ececec" rx="0.6"/><rect x="1158.1" y="473.00" width="14.3" height="2.7" fill="#ececec" rx="0.6"/><rect x="1158.1" y="477.50" width="14.3" height="2.7" fill="#ececec" rx="0.6"/><path d="M23.35,521.60 L27.00,525.40 L30.65,521.60" fill="none" stroke="#ececec" stroke-width="2" stroke-linecap="square"/><g transform="translate(181.60,522.50) rotate(-45)"><path d="M-7.04,0 L-4.04,-2.10 L6.24,-2.10 Q7.037999999999999,-2.1 7.037999999999999,-1.3 L7.037999999999999,1.3 Q7.037999999999999,2.1 6.24,2.10 L-4.04,2.10 Z" fill="#ececec"/><line x1="3.84" y1="-2.10" x2="3.84" y2="2.10" stroke="#11305a" stroke-width="0.7"/></g><g transform="translate(1130.10,522.10)"><circle r="5.5" fill="#ececec"/><rect x="-7.2" y="-1.55" width="14.4" height="3.1" rx="0.5" fill="#ececec" transform="rotate(0)"/><rect x="-7.2" y="-1.55" width="14.4" height="3.1" rx="0.5" fill="#ececec" transform="rotate(45)"/><rect x="-7.2" y="-1.55" width="14.4" height="3.1" rx="0.5" fill="#ececec" transform="rotate(90)"/><rect x="-7.2" y="-1.55" width="14.4" height="3.1" rx="0.5" fill="#ececec" transform="rotate(135)"/><circle r="2.1" fill="#11305a"/></g><rect x="1158.1" y="516.40" width="14.3" height="2.7" fill="#ececec" rx="0.6"/><rect x="1158.1" y="521.00" width="14.3" height="2.7" fill="#ececec" rx="0.6"/><rect x="1158.1" y="525.50" width="14.3" height="2.7" fill="#ececec" rx="0.6"/><path d="M23.35,569.60 L27.00,573.40 L30.65,569.60" fill="none" stroke="#ececec" stroke-width="2" stroke-linecap="square"/><g transform="translate(152.60,570.50) rotate(-45)"><path d="M-7.04,0 L-4.04,-2.10 L6.24,-2.10 Q7.037999999999999,-2.1 7.037999999999999,-1.3 L7.037999999999999,1.3 Q7.037999999999999,2.1 6.24,2.10 L-4.04,2.10 Z" fill="#ececec"/><line x1="3.84" y1="-2.10" x2="3.84" y2="2.10" stroke="#11305a" stroke-width="0.7"/></g><g transform="translate(1130.10,570.10)"><circle r="5.5" fill="#ececec"/><rect x="-7.2" y="-1.55" width="14.4" height="3.1" rx="0.5" fill="#ececec" transform="rotate(0)"/><rect x="-7.2" y="-1.55" width="14.4" height="3.1" rx="0.5" fill="#ececec" transform="rotate(45)"/><rect x="-7.2" y="-1.55" width="14.4" height="3.1" rx="0.5" fill="#ececec" transform="rotate(90)"/><rect x="-7.2" y="-1.55" width="14.4" height="3.1" rx="0.5" fill="#ececec" transform="rotate(135)"/><circle r="2.1" fill="#11305a"/></g><rect x="1158.1" y="564.40" width="14.3" height="2.7" fill="#ececec" rx="0.6"/><rect x="1158.1" y="569.00" width="14.3" height="2.7" fill="#ececec" rx="0.6"/><rect x="1158.1" y="573.50" width="14.3" height="2.7" fill="#ececec" rx="0.6"/><path d="M23.35,617.60 L27.00,621.40 L30.65,617.60" fill="none" stroke="#ececec" stroke-width="2" stroke-linecap="square"/><g transform="translate(133.60,618.50) rotate(-45)"><path d="M-7.04,0 L-4.04,-2.10 L6.24,-2.10 Q7.037999999999999,-2.1 7.037999999999999,-1.3 L7.037999999999999,1.3 Q7.037999999999999,2.1 6.24,2.10 L-4.04,2.10 Z" fill="#ececec"/><line x1="3.84" y1="-2.10" x2="3.84" y2="2.10" stroke="#11305a" stroke-width="0.7"/></g><g transform="translate(1130.10,618.10)"><circle r="5.5" fill="#ececec"/><rect x="-7.2" y="-1.55" width="14.4" height="3.1" rx="0.5" fill="#ececec" transform="rotate(0)"/><rect x="-7.2" y="-1.55" width="14.4" height="3.1" rx="0.5" fill="#ececec" transform="rotate(45)"/><rect x="-7.2" y="-1.55" width="14.4" height="3.1" rx="0.5" fill="#ececec" transform="rotate(90)"/><rect x="-7.2" y="-1.55" width="14.4" height="3.1" rx="0.5" fill="#ececec" transform="rotate(135)"/><circle r="2.1" fill="#11305a"/></g><rect x="1158.1" y="612.40" width="14.3" height="2.7" fill="#ececec" rx="0.6"/><rect x="1158.1" y="617.00" width="14.3" height="2.7" fill="#ececec" rx="0.6"/><rect x="1158.1" y="621.50" width="14.3" height="2.7" fill="#ececec" rx="0.6"/><rect x="7.8" y="13.9" width="1.5" height="14.2" fill="#4290e6"/><rect x="7.8" y="26.6" width="18.8" height="1.5" fill="#4290e6"/><rect x="10.9" y="20.7" width="3.1999999999999993" height="5.300000000000001" rx="0.8" fill="#4290e6"/><rect x="14.7" y="16.8" width="2.6999999999999993" height="9.2" rx="0.8" fill="#4290e6"/><rect x="17.8" y="19" width="3.1999999999999993" height="7" rx="0.8" fill="#4290e6"/><rect x="21.6" y="15.2" width="2.6999999999999993" height="10.8" rx="0.8" fill="#4290e6"/><path d="M1005.5,17.2 L1015.8,17.2 L1011.8,21.6 L1011.8,26.9 L1009.3,24.6 L1009.3,21.6 Z" fill="#4290e6" stroke="#4290e6" stroke-width="0.6" stroke-linejoin="round"/><path d="M1033.5,24.6 L1031.4,24.6 L1031.4,15.6 L1040.4,15.6 L1040.4,17.6" fill="none" stroke="#4290e6" stroke-width="1.3"/><rect x="1034.4" y="17.8" width="9.2" height="9.5" rx="0.8" fill="none" stroke="#4290e6" stroke-width="1.3"/><g fill="none" stroke="#4290e6" stroke-width="2"><path d="M1060,20.6 A5,5 0 0 1 1068.4,18.4"/><path d="M1068.8,22.4 A5,5 0 0 1 1060.4,24.6"/></g><path d="M1070.2,16 L1070.2,21.2 L1065.2,21.2 Z" fill="#4290e6"/><path d="M1058.6,26.9 L1058.6,21.8 L1063.6,21.8 Z" fill="#4290e6"/><path d="M1097,14.6 L1084.6,21.3 L1088.4,22.8 L1090.2,27 L1091.9,24.5 L1095.5,25.9 Z" fill="#4290e6" stroke="#4290e6" stroke-width="0.4" stroke-linejoin="round"/><path d="M1097,14.6 L1089,23.1 L1090.2,26" fill="none" stroke="#0e0e0e" stroke-width="0.8"/><g fill="#4290e6"><circle cx="1120.6" cy="18.3" r="2.6"/><circle cx="1114.3" cy="21.4" r="2.6"/><circle cx="1120.6" cy="24.5" r="2.6"/></g><path d="M1120.6,18.3 L1114.3,21.4 L1120.6,24.5" fill="none" stroke="#4290e6" stroke-width="1.5"/><path d="M1146,15.3 L1139.5,15.3 Q1138.4,15.3 1138.4,16.4 L1138.4,24.6 Q1138.4,25.7 1139.5,25.7 L1147.8,25.7 Q1148.9,25.7 1148.9,24.6 L1148.9,21.8" fill="none" stroke="#4290e6" stroke-width="1.3"/><g transform="translate(1146.2,19.6) rotate(-45)"><path d="M-6.2,0 L-4.2,-1.8 L5.2,-1.8 L5.2,1.8 L-4.2,1.8 Z" fill="#4290e6"/><line x1="3.2" y1="-1.8" x2="3.2" y2="1.8" stroke="#0e0e0e" stroke-width="0.6"/></g><rect x="1167" y="16.6" width="11" height="1.6" fill="#ec4a3e"/><path d="M1170.4,16.8 L1170.4,15.3 L1174.6,15.3 L1174.6,16.8" fill="none" stroke="#ec4a3e" stroke-width="1.2"/><path d="M1168,18.6 L1177,18.6 L1176.4,27 L1168.6,27 Z" fill="#ec4a3e"/><rect x="1169.7" y="19.8" width="1" height="5.8" fill="#0e0e0e"/><rect x="1172.0" y="19.8" width="1" height="5.8" fill="#0e0e0e"/><rect x="1174.2" y="19.8" width="1" height="5.8" fill="#0e0e0e"/><g stroke="#e08a00" stroke-width="4.3" stroke-linecap="round"><line x1="1155.3" y1="72.9" x2="1165" y2="82.1"/><line x1="1165" y1="72.9" x2="1155.3" y2="82.1"/></g><path d="M335.60,81.60 L340.20,86.40 L344.80,81.60" fill="none" stroke="#ececec" stroke-width="2.1" stroke-linecap="square"/><path d="M515.60,81.60 L520.20,86.40 L524.80,81.60" fill="none" stroke="#ececec" stroke-width="2.1" stroke-linecap="square"/><path d="M695.60,81.60 L700.20,86.40 L704.80,81.60" fill="none" stroke="#ececec" stroke-width="2.1" stroke-linecap="square"/><path d="M875.60,81.60 L880.20,86.40 L884.80,81.60" fill="none" stroke="#ececec" stroke-width="2.1" stroke-linecap="square"/><path d="M1055.60,86.50 L1060.20,81.80 L1064.80,86.50" fill="none" stroke="#ececec" stroke-width="2.1" stroke-linecap="square"/><g stroke="#f4f4f4" stroke-width="3.6" stroke-linecap="round"><line x1="156.9" y1="81.2" x2="163.2" y2="87.5"/><line x1="163.2" y1="81.2" x2="156.9" y2="87.5"/></g><g transform="translate(341.3,223.8)"><path d="M7.4,0 L13.3,0 L13.3,5.9 Z" fill="#ececec"/><path d="M0,6.3 L0,12.2 L5.9,12.2 Z" fill="#ececec"/><line x1="11.2" y1="2.1" x2="7.6" y2="5.5" stroke="#ececec" stroke-width="2.5"/><line x1="2.1" y1="10.1" x2="5.6" y2="6.8" stroke="#ececec" stroke-width="2.5"/></g><rect x="374" y="224.00" width="4" height="3.1" fill="#ececec"/><rect x="374" y="228.10" width="4" height="3.1" fill="#ececec"/><rect x="374" y="232.10" width="4" height="3.1" fill="#ececec"/><g transform="translate(738.3,223.8)"><path d="M7.4,0 L13.3,0 L13.3,5.9 Z" fill="#ececec"/><path d="M0,6.3 L0,12.2 L5.9,12.2 Z" fill="#ececec"/><line x1="11.2" y1="2.1" x2="7.6" y2="5.5" stroke="#ececec" stroke-width="2.5"/><line x1="2.1" y1="10.1" x2="5.6" y2="6.8" stroke="#ececec" stroke-width="2.5"/></g><rect x="771" y="224.00" width="4" height="3.1" fill="#ececec"/><rect x="771" y="228.10" width="4" height="3.1" fill="#ececec"/><rect x="771" y="232.10" width="4" height="3.1" fill="#ececec"/><g transform="translate(1136.3,223.8)"><path d="M7.4,0 L13.3,0 L13.3,5.9 Z" fill="#ececec"/><path d="M0,6.3 L0,12.2 L5.9,12.2 Z" fill="#ececec"/><line x1="11.2" y1="2.1" x2="7.6" y2="5.5" stroke="#ececec" stroke-width="2.5"/><line x1="2.1" y1="10.1" x2="5.6" y2="6.8" stroke="#ececec" stroke-width="2.5"/></g><rect x="1169" y="224.00" width="4" height="3.1" fill="#ececec"/><rect x="1169" y="228.10" width="4" height="3.1" fill="#ececec"/><rect x="1169" y="232.10" width="4" height="3.1" fill="#ececec"/></svg>

<div class="abs dd">
<div class="it" style="top:7px">ALL</div><div class="it" style="top:39px">ANY</div><div class="it" style="top:71px">EACH_QUORUM</div><div class="it" style="top:103px">LOCAL_ONE</div><div class="it" style="top:135px;color:#5cb85c;background:#3a3a3a;left:0;width:156px;padding-left:8px">LOCAL_QUORUM</div><div class="it" style="top:167px">LOCAL_SERIAL</div><div class="it" style="top:199px">ONE</div><div class="it" style="top:231px">QUORUM</div><div class="it" style="top:263px">SERIAL</div>
<div class="abs" style="left:156px;top:0;width:11px;height:290px;background:#444"></div>
<div class="abs" style="left:157.8px;top:29px;width:6.3px;height:198px;background:#a3a3a3;border-radius:3px"></div>
<svg class="abs" style="left:156px;top:0" width="11" height="290"><path d="M2.5,8 L5.5,3.6 L8.5,8 Z" fill="#a3a3a3"/><path d="M2.5,281.5 L5.5,286 L8.5,281.5 Z" fill="#a3a3a3"/></svg>
</div>

<div class="abs redbox" style="left:721.5px;top:40px;width:174.5px;height:74px;border-width:4px"></div>
<div class="abs redbox" style="left:901px;top:44.5px;width:183px;height:365px"></div>

<div class="abs" style="left:1055px;top:651px;width:122px;height:30px;background:#52b254;border-radius:3px;box-shadow:0 1px 2px rgba(0,0,0,.3)"></div>
<div class="abs" style="left:1062.3px;top:660px;width:13px;height:11.8px;background:#f4f4f4;border-radius:2px"></div>
<div class="abs" style="left:1067.9px;top:662px;width:2px;height:7.8px;background:#52b254"></div>
<div class="abs" style="left:1064.9px;top:664.9px;width:7.8px;height:2px;background:#52b254"></div>
<div class="abs" style="left:1080px;top:659px;font-size:12px;color:#fff;line-height:14px">ADD NEW ROW</div>
</body></html>
